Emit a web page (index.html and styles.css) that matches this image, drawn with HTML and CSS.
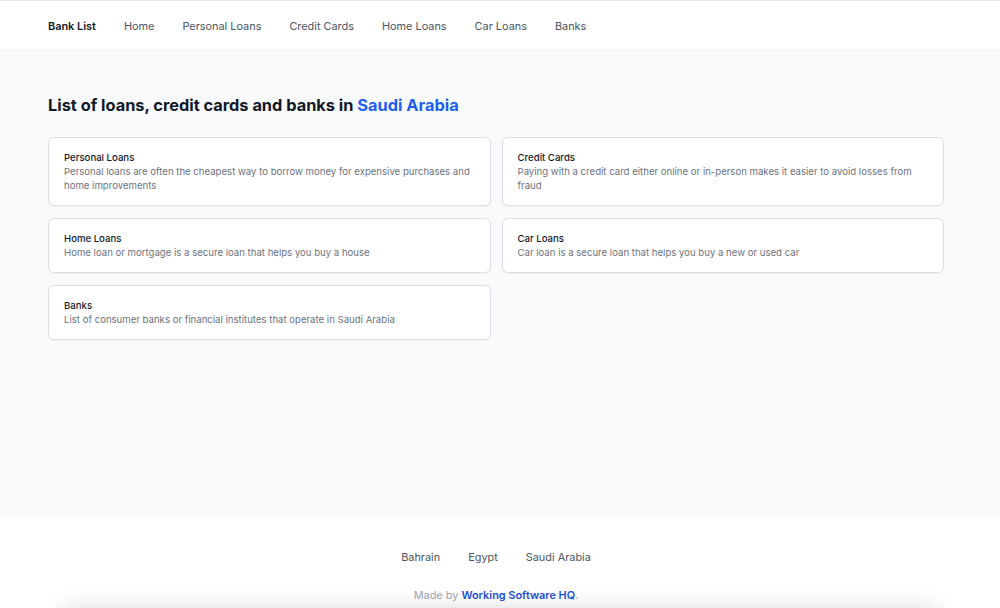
FILE: index.html
```html
<!DOCTYPE html>
<html lang="en">
<head>
  <meta charset="UTF-8" />
  <meta name="viewport" content="width=device-width, initial-scale=1.0"/>
  <title>Bank List</title>
  <link rel="stylesheet" href="styles.css">
</head>
<body>
  <nav class="topnav">
    <a class="brand" href="#">Bank List</a>
    <a href="#">Home</a>
    <a href="#">Personal Loans</a>
    <a href="#">Credit Cards</a>
    <a href="#">Home Loans</a>
    <a href="#">Car Loans</a>
    <a href="#">Banks</a>
  </nav>

  <main class="main">
    <h1 class="title">List of loans, credit cards and banks in <span class="country">Saudi Arabia</span></h1>
    <div class="cards">
      <a class="card" href="#">
        <div class="card-title">Personal Loans</div>
        <div class="card-text">Personal loans are often the cheapest way to borrow money for expensive purchases and home improvements</div>
      </a>
      <a class="card" href="#">
        <div class="card-title">Credit Cards</div>
        <div class="card-text">Paying with a credit card either online or in-person makes it easier to avoid losses from fraud</div>
      </a>
      <a class="card" href="#">
        <div class="card-title">Home Loans</div>
        <div class="card-text">Home loan or mortgage is a secure loan that helps you buy a house</div>
      </a>
      <a class="card" href="#">
        <div class="card-title">Car Loans</div>
        <div class="card-text">Car loan is a secure loan that helps you buy a new or used car</div>
      </a>
      <a class="card" href="#">
        <div class="card-title">Banks</div>
        <div class="card-text">List of consumer banks or financial institutes that operate in Saudi Arabia</div>
      </a>
    </div>
  </main>

  <footer class="footer">
    <div class="countries">
      <a href="#">Bahrain</a>
      <a href="#">Egypt</a>
      <a href="#">Saudi Arabia</a>
    </div>
    <p class="credit">Made by <a href="#">Working Software HQ</a>.</p>
  </footer>
  <div class="frame-edge"></div>
</body>
</html>
```

FILE: styles.css
```css
* {
  box-sizing: border-box;
}

body {
  margin: 0;
  font-family: Inter, 'Noto Sans', sans-serif;
  color: #111827;
  background: #fff;
  overflow: hidden;
}

a {
  text-decoration: none;
  color: inherit;
}

.topnav {
  height: 49px;
  border-top: 1px solid #e2e3e6;
  display: flex;
  align-items: center;
  gap: 28px;
  padding: 1px 48px 0;
  font-size: 10.9px;
  color: #4b5563;
  background: #fff;
}

.topnav .brand {
  font-weight: 600;
  color: #111827;
}

.main {
  background: #f9fafb;
  min-height: 467px;
  padding: 43px 56px 0 48px;
}

.title {
  margin: 0 0 19px;
  font-size: 16.35px;
  line-height: 26px;
  font-weight: 700;
}

.country {
  color: #1d5ff0;
}

.cards {
  display: grid;
  grid-template-columns: repeat(2, 1fr);
  gap: 12px 11px;
  width: 896px;
}

.card {
  display: block;
  background: #fff;
  border: 1px solid #dcdee2;
  border-radius: 6px;
  padding: 13px 15px 12px;
  box-shadow: 0 1px 2px rgba(0, 0, 0, 0.04);
}

.card-title {
  font-size: 9.6px;
  line-height: 14px;
  font-weight: 500;
  color: #111827;
}

.card-text {
  font-size: 9.6px;
  line-height: 14px;
  color: #6b7280;
}

.footer {
  background: #fff;
  padding: 33px 8px 0 0;
  text-align: center;
  font-size: 10.9px;
}

.countries {
  display: flex;
  justify-content: center;
  gap: 28px;
  color: #4b5563;
  line-height: 16px;
}

.credit {
  margin: 22px 0 0;
  line-height: 16px;
  color: #9ca3af;
}

.credit a {
  color: #1d4ed8;
  font-weight: 600;
}

.frame-edge {
  width: 870px;
  height: 40px;
  margin: 14px auto 0;
  background: #fff;
  box-shadow: 0 -4px 26px rgba(0, 0, 0, 0.22);
}
```
